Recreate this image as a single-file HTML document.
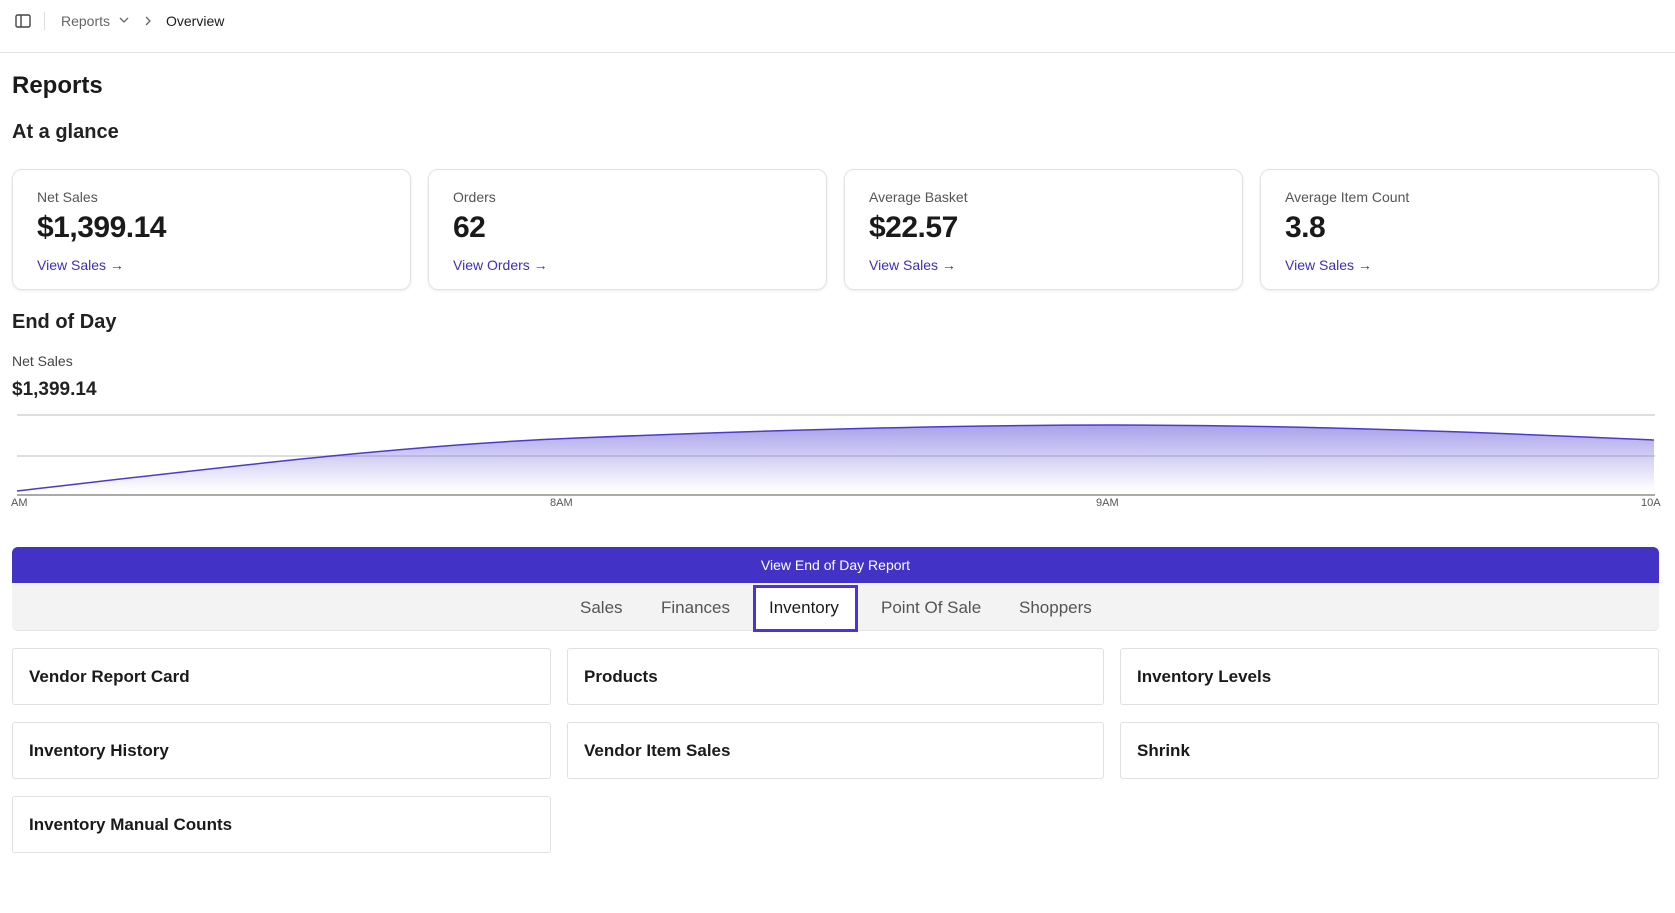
<!DOCTYPE html>
<html><head><meta charset="utf-8"><style>
*{box-sizing:border-box;margin:0;padding:0}
body{width:1675px;height:913px;background:#fff;font-family:"Liberation Sans",sans-serif;color:#1a1a1a;position:relative;overflow:hidden}
.a{position:absolute;white-space:nowrap}
.card{position:absolute;top:169px;width:399px;height:121px;border:1px solid #e2e2e2;border-radius:10px;box-shadow:0 1px 3px rgba(0,0,0,.08)}
.card .l{position:absolute;left:24px;top:19px;font-size:14px;color:#555}
.card .v{position:absolute;left:24px;top:41px;font-size:30px;font-weight:bold;color:#1a1a1a;letter-spacing:-.5px}
.card .k{position:absolute;left:24px;top:87px;font-size:14px;color:#3b2fbf}
.tab{position:absolute;top:598px;font-size:17px;color:#555}
.it{position:absolute;height:57px;border:1px solid #e0e0e0;border-radius:3px;font-size:17px;font-weight:bold;padding-left:16px;line-height:55px;color:#1a1a1a}
</style></head><body>
<svg class="a" style="left:15px;top:14px" width="16" height="14" viewBox="0 0 16 14"><rect x="1" y="1" width="14" height="12" rx="1.5" fill="none" stroke="#444" stroke-width="1.4"/><line x1="6" y1="1" x2="6" y2="13" stroke="#444" stroke-width="1.4"/></svg>
<div class="a" style="left:44px;top:12px;width:1px;height:18px;background:#ddd"></div>
<div class="a" style="left:61px;top:13px;font-size:14px;color:#666">Reports</div>
<svg class="a" style="left:119px;top:17px" width="10" height="7"><path d="M1 1l4 4 4-4" fill="none" stroke="#666" stroke-width="1.3"/></svg>
<svg class="a" style="left:145px;top:16px" width="7" height="10"><path d="M1 1l4 4-4 4" fill="none" stroke="#666" stroke-width="1.3"/></svg>
<div class="a" style="left:166px;top:13px;font-size:14px;color:#1a1a1a">Overview</div>
<div class="a" style="left:0;top:52px;width:1675px;height:1px;background:#e2e2e2"></div>
<div class="a" style="left:12px;top:72px;font-size:24px;font-weight:bold">Reports</div>
<div class="a" style="left:12px;top:121px;font-size:20px;font-weight:bold;color:#222">At a glance</div>
<div class="card" style="left:12px"><div class="l">Net Sales</div><div class="v">$1,399.14</div><div class="k">View Sales →</div></div>
<div class="card" style="left:428px"><div class="l">Orders</div><div class="v">62</div><div class="k">View Orders →</div></div>
<div class="card" style="left:844px"><div class="l">Average Basket</div><div class="v">$22.57</div><div class="k">View Sales →</div></div>
<div class="card" style="left:1260px"><div class="l">Average Item Count</div><div class="v">3.8</div><div class="k">View Sales →</div></div>
<div class="a" style="left:12px;top:311px;font-size:20px;font-weight:bold;color:#222">End of Day</div>
<div class="a" style="left:12px;top:353px;font-size:14px;color:#444">Net Sales</div>
<div class="a" style="left:12px;top:379px;font-size:19px;font-weight:bold;color:#222">$1,399.14</div>
<svg class="a" style="left:0;top:405px" width="1675" height="110">
<defs><linearGradient id="g" x1="0" y1="0" x2="0" y2="1"><stop offset="0" stop-color="#7a6fe0" stop-opacity=".65"/><stop offset="1" stop-color="#7a6fe0" stop-opacity="0"/></linearGradient></defs>
<line x1="17" y1="10" x2="1655" y2="10" stroke="#ddd" stroke-width="2"/>
<line x1="17" y1="51" x2="1655" y2="51" stroke="#ddd" stroke-width="2"/>
<path d="M17 86 C200 65 400 40 577 33 C750 26 950 20 1111 20 C1300 20 1500 28 1654 35 L1654 85 L17 85Z" fill="url(#g)"/>
<path d="M17 86 C200 65 400 40 577 33 C750 26 950 20 1111 20 C1300 20 1500 28 1654 35" fill="none" stroke="#4a3cc8" stroke-width="1.5"/>
<line x1="17" y1="90" x2="1655" y2="90" stroke="#aaa" stroke-width="2"/>
<text x="11" y="101" font-size="11" fill="#555" font-family="Liberation Sans">AM</text>
<text x="550" y="101" font-size="11" fill="#555" font-family="Liberation Sans">8AM</text>
<text x="1096" y="101" font-size="11" fill="#555" font-family="Liberation Sans">9AM</text>
<text x="1641" y="101" font-size="11" fill="#555" font-family="Liberation Sans">10A</text>
</svg>
<div class="a" style="left:12px;top:547px;width:1647px;height:36px;background:#4332c6;border-radius:6px 6px 0 0;color:#fff;font-size:14px;text-align:center;line-height:36px">View End of Day Report</div>
<div class="a" style="left:12px;top:583px;width:1647px;height:48px;background:#f3f3f3;border-bottom:1px solid #e3e3e3;border-radius:0 0 6px 6px"></div>
<div class="a" style="left:753px;top:585px;width:105px;height:47px;background:#fff;border:3px solid #4a32e0"></div>
<div class="tab" style="left:580px">Sales</div>
<div class="tab" style="left:661px">Finances</div>
<div class="tab" style="left:769px;color:#1a1a1a">Inventory</div>
<div class="tab" style="left:881px">Point Of Sale</div>
<div class="tab" style="left:1019px">Shoppers</div>
<div class="it" style="left:12px;top:648px;width:539px">Vendor Report Card</div>
<div class="it" style="left:567px;top:648px;width:537px">Products</div>
<div class="it" style="left:1120px;top:648px;width:539px">Inventory Levels</div>
<div class="it" style="left:12px;top:722px;width:539px">Inventory History</div>
<div class="it" style="left:567px;top:722px;width:537px">Vendor Item Sales</div>
<div class="it" style="left:1120px;top:722px;width:539px">Shrink</div>
<div class="it" style="left:12px;top:796px;width:539px">Inventory Manual Counts</div>
</body></html>
